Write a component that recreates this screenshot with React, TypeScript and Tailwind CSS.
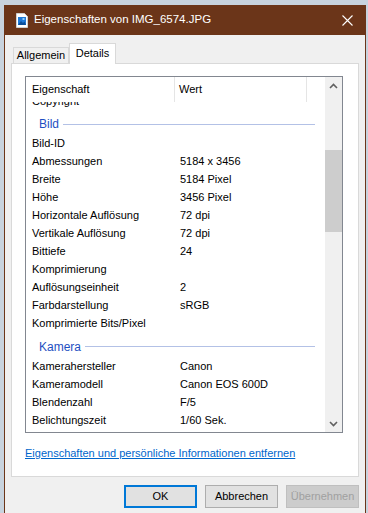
import React from 'react';

const font = { fontFamily: '"Liberation Sans", Arial, sans-serif' };

type Row = { name: string; value?: string };

const bildRows: Row[] = [
  { name: 'Bild-ID' },
  { name: 'Abmessungen', value: '5184 x 3456' },
  { name: 'Breite', value: '5184 Pixel' },
  { name: 'Höhe', value: '3456 Pixel' },
  { name: 'Horizontale Auflösung', value: '72 dpi' },
  { name: 'Vertikale Auflösung', value: '72 dpi' },
  { name: 'Bittiefe', value: '24' },
  { name: 'Komprimierung' },
  { name: 'Auflösungseinheit', value: '2' },
  { name: 'Farbdarstellung', value: 'sRGB' },
  { name: 'Komprimierte Bits/Pixel' },
];

const kameraRows: Row[] = [
  { name: 'Kamerahersteller', value: 'Canon' },
  { name: 'Kameramodell', value: 'Canon EOS 600D' },
  { name: 'Blendenzahl', value: 'F/5' },
  { name: 'Belichtungszeit', value: '1/60 Sek.' },
];

const PropRow = ({ row }: { row: Row }) => (
  <div className="flex h-[18px] items-center text-[11px] text-black">
    <span className="w-[154px] pl-[6px] whitespace-nowrap">{row.name}</span>
    <span className="whitespace-nowrap">{row.value}</span>
  </div>
);

const Group = ({ label, h }: { label: string; h: string }) => (
  <div className={`flex items-center pt-[4px] pl-[13px] pr-[10px] ${h}`}>
    <span className="text-[12px] text-[#1e4fc2] whitespace-nowrap">{label}</span>
    <div className="ml-[4px] h-px flex-1 bg-[#b3c1e6]" />
  </div>
);

const FileIcon = () => (
  <svg width="12" height="15" viewBox="0 0 12 15">
    <path d="M0.5 0.5h8l3 3v11h-11z" fill="#ffffff" stroke="#d0d0d0" />
    <rect x="2" y="4" width="8" height="8" fill="#1f7ad8" />
    <path d="M2 12l3-4 2 2 1.5-1.5L10 12z" fill="#0b4f9a" />
    <rect x="6.5" y="5" width="2" height="2" fill="#8fd0ff" />
  </svg>
);

const Chevron = ({ up }: { up?: boolean }) => (
  <svg width="9" height="6" viewBox="0 0 9 6">
    <path d={up ? 'M1 5l3.5-3.5L8 5' : 'M1 1l3.5 3.5L8 1'} fill="none" stroke="#606060" strokeWidth="1.6" />
  </svg>
);

export default function App() {
  return (
    <div className="flex h-[513px] w-[368px] flex-col overflow-hidden bg-[#c8d3de]" style={font}>
      <div className="h-[5px] shrink-0" />
      <div className="flex flex-1">
        <div className="w-[4px] shrink-0" />
        <div className="flex w-[362px] flex-col border-x border-[#6b3519] bg-[#f0f0f0]">
          {/* Title bar */}
          <div className="flex h-[30px] shrink-0 items-center bg-[#6b3519] pl-[11px] pr-[12px]">
            <FileIcon />
            <span className="ml-[6px] text-[11.5px] text-white">Eigenschaften von IMG_6574.JPG</span>
            <svg className="ml-auto" width="11" height="11" viewBox="0 0 11 11">
              <path d="M0.5 0.5l10 10M10.5 0.5l-10 10" stroke="#ffffff" strokeWidth="1.1" />
            </svg>
          </div>

          {/* Tabs */}
          <div className="flex h-[28px] shrink-0 items-end pl-[8px] pt-[8px]">
            <div className="flex h-[16px] w-[56px] items-center justify-center border border-b-0 border-[#d9d9d9] bg-[#f0f0f0] text-[11px] text-black">
              Allgemein
            </div>
            <div className="relative -mb-px flex h-[21px] w-[47px] items-center justify-center border border-b-0 border-[#d9d9d9] bg-white pb-[2px] text-[11px] text-black">
              Details
            </div>
          </div>

          {/* Panel */}
          <div className="mx-[6px] flex h-[414px] shrink-0 flex-col border border-[#d9d9d9] bg-white">
            <div className="ml-[13px] mt-[12px] flex h-[357px] w-[318px] border border-[#828790]">
              <div className="flex w-[299px] flex-col">
                <div className="flex h-[25px] shrink-0 text-[11px] text-black">
                  <div className="flex w-[149px] items-center border-r border-[#e5e5e5] pl-[6px]">Eigenschaft</div>
                  <div className="flex w-[132px] items-center border-r border-[#e5e5e5] pl-[4px]">Wert</div>
                </div>
                <div className="flex-1 overflow-hidden">
                  <div className="-mt-[10px]">
                    <PropRow row={{ name: 'Copyright' }} />
                    <Group label="Bild" h="h-[24px]" />
                    {bildRows.map(r => (
                      <PropRow key={r.name} row={r} />
                    ))}
                    <Group label="Kamera" h="h-[25px]" />
                    {kameraRows.map(r => (
                      <PropRow key={r.name} row={r} />
                    ))}
                  </div>
                </div>
              </div>
              {/* Scrollbar */}
              <div className="flex w-[17px] flex-col bg-[#f0f0f0]">
                <div className="flex h-[17px] items-center justify-center">
                  <Chevron up />
                </div>
                <div className="h-[56px]" />
                <div className="h-[82px] bg-[#cdcdcd]" />
                <div className="flex-1" />
                <div className="flex h-[17px] items-center justify-center">
                  <Chevron />
                </div>
              </div>
            </div>
            <div className="ml-[13px] mt-[12px] text-[11px] text-[#0066cc] underline">
              Eigenschaften und persönliche Informationen entfernen
            </div>
          </div>

          {/* Buttons */}
          <div className="flex justify-end gap-[8px] pr-[6px] pt-[8px]">
            <button className="h-[23px] w-[73px] border-2 border-[#0078d7] bg-[#e1e1e1] text-[11px] text-black">OK</button>
            <button className="h-[23px] w-[73px] border border-[#adadad] bg-[#e1e1e1] text-[11px] text-black">Abbrechen</button>
            <button className="h-[23px] w-[73px] border border-[#bfbfbf] bg-[#cccccc] text-[11px] text-[#a0a0a0]">Übernehmen</button>
          </div>
        </div>
        <div className="w-[2px] shrink-0" />
      </div>
    </div>
  );
}
